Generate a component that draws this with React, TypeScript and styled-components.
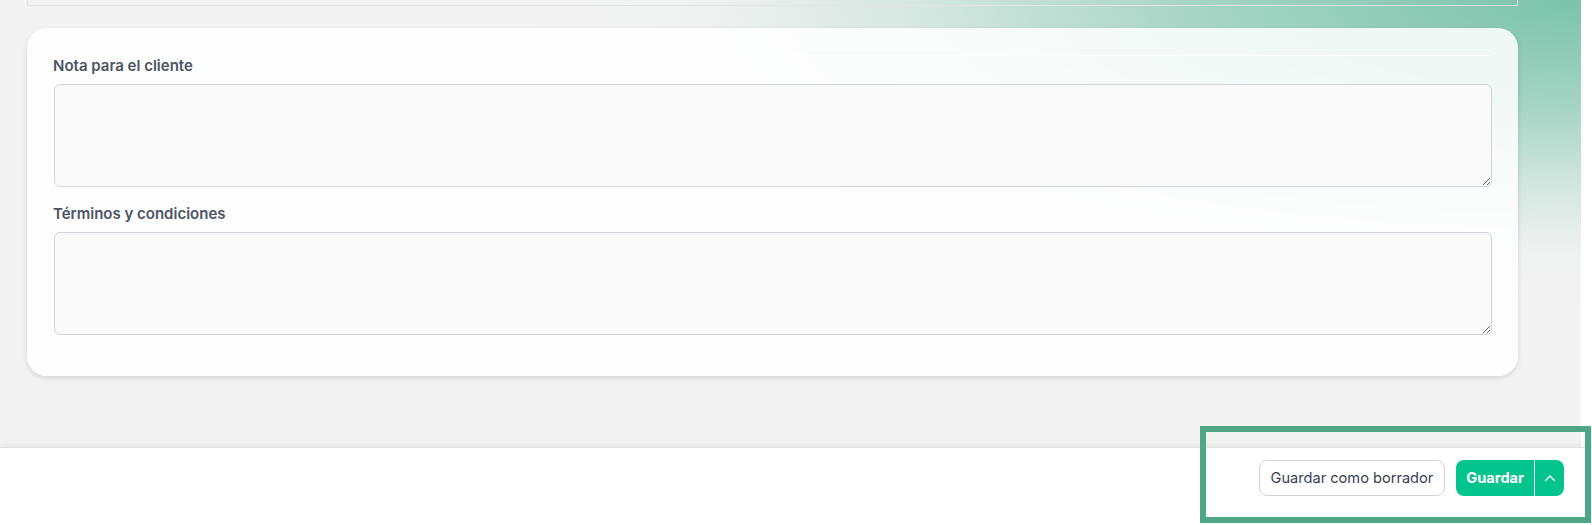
import React from "react";
import styled, { createGlobalStyle } from "styled-components";

const GlobalStyle = createGlobalStyle`
  html, body {
    margin: 0;
    padding: 0;
    background: #ffffff;
  }
  body {
    font-family: Inter, "Noto Sans", sans-serif;
  }
  * {
    box-sizing: border-box;
  }
`;

const Page = styled.div`
  display: flex;
  flex-direction: column;
  height: 100vh;
  position: relative;
  overflow: hidden;
`;

const Main = styled.main`
  flex: 1;
  margin-right: 11px;
  padding: 0 63px 0 27px;
  background:
    radial-gradient(
      ellipse 1050px 300px at 100% 0%,
      rgba(110, 190, 164, 0.9) 0%,
      rgba(130, 198, 176, 0.7) 35%,
      rgba(175, 215, 203, 0.4) 65%,
      rgba(225, 235, 232, 0.15) 85%,
      rgba(243, 243, 243, 0) 100%
    ),
    #f3f3f3;
`;

const PrevCardEdge = styled.div`
  height: 6px;
  border: 1px solid #e3e5e5;
  border-top: none;
  margin-bottom: 22px;
`;

const Card = styled.section`
  background: rgba(255, 255, 255, 0.85);
  border-radius: 20px;
  padding: 27px 26px 41px 27px;
  box-shadow: 0 2px 5px rgba(0, 0, 0, 0.13);
`;

const Fields = styled.div`
  display: flex;
  flex-direction: column;
  gap: 17px;
  border-top: 1px solid rgba(255, 255, 255, 0.9);
`;

const Field = styled.div`
  display: flex;
  flex-direction: column;
`;

const Label = styled.label`
  font-size: 15px;
  line-height: 20px;
  font-weight: 600;
  color: #4b5563;
  margin-bottom: 8px;
  margin-left: -1px;
`;

const TextArea = styled.textarea`
  display: block;
  width: 100%;
  height: 103px;
  border: 1px solid #d2d4dc;
  border-radius: 6px;
  background: #fafafa;
  font-family: inherit;
  font-size: 15px;
  padding: 8px 12px;
  outline: none;
`;

const Footer = styled.footer`
  height: 78px;
  flex: none;
  background: #ffffff;
  display: flex;
  justify-content: flex-end;
  align-items: flex-start;
  gap: 11px;
  padding: 12px 28px 0 0;
  box-shadow: 0 -3px 6px rgba(0, 0, 0, 0.05);
  border-top: 1px solid #e2e2e2;
  position: relative;
`;

const OutlineButton = styled.button`
  height: 36px;
  padding: 0 11px;
  border: 1px solid #d1d5db;
  border-radius: 8px;
  background: #ffffff;
  color: #374151;
  font-family: inherit;
  font-size: 14.6px;
  font-weight: 400;
  cursor: pointer;
`;

const SplitButton = styled.div`
  display: flex;
  height: 36px;
  border-radius: 8px;
  overflow: hidden;
  background: #03c48c;
`;

const SplitPart = styled.button<{ $narrow?: boolean }>`
  height: 100%;
  border: none;
  background: transparent;
  color: #ffffff;
  font-family: inherit;
  font-size: 14.6px;
  font-weight: 700;
  padding: ${(p) => (p.$narrow ? "0" : "0 10px")};
  width: ${(p) => (p.$narrow ? "30px" : "auto")};
  display: flex;
  align-items: center;
  justify-content: center;
  border-left: ${(p) => (p.$narrow ? "1px solid #ffffff" : "none")};
  cursor: pointer;
`;

const Highlight = styled.div`
  position: absolute;
  left: 1200px;
  top: 426px;
  width: 391px;
  height: 97px;
  border: 6px solid #4ea685;
  pointer-events: none;
`;

function ChevronUp() {
  return (
    <svg width="12" height="8" viewBox="0 0 12 8" fill="none">
      <path d="M1.5 6.5L6 2l4.5 4.5" stroke="#ffffff" strokeWidth="1.4" strokeLinecap="round" strokeLinejoin="round" />
    </svg>
  );
}

export default function App() {
  return (
    <Page>
      <GlobalStyle />
      <Main>
        <PrevCardEdge />
        <Card>
          <Fields>
            <Field>
              <Label>Nota para el cliente</Label>
              <TextArea />
            </Field>
            <Field>
              <Label>Términos y condiciones</Label>
              <TextArea />
            </Field>
          </Fields>
        </Card>
      </Main>
      <Footer>
        <OutlineButton>Guardar como borrador</OutlineButton>
        <SplitButton>
          <SplitPart>Guardar</SplitPart>
          <SplitPart $narrow>
            <ChevronUp />
          </SplitPart>
        </SplitButton>
      </Footer>
      <Highlight />
    </Page>
  );
}
